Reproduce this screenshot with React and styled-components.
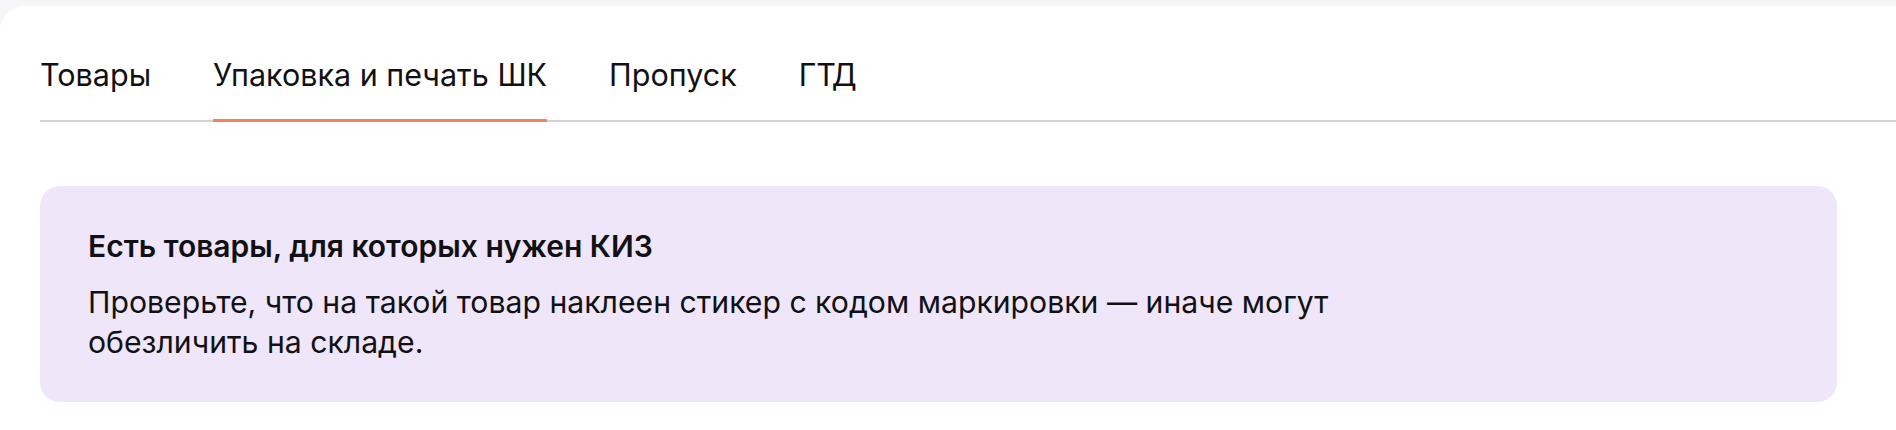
import React, { useState } from "react";
import styled, { createGlobalStyle } from "styled-components";

const GlobalStyle = createGlobalStyle`
  html, body {
    margin: 0;
    padding: 0;
    background: #f6f6f8;
  }
  body {
    font-family: Inter, "Noto Sans", "Liberation Sans", sans-serif;
    color: #111114;
    -webkit-font-smoothing: antialiased;
  }
  * { box-sizing: border-box; }
`;

const Page = styled.div`
  padding-top: 6px;
  min-height: 430px;
`;

const Panel = styled.section`
  background: #ffffff;
  border-top-left-radius: 24px;
  min-height: 424px;
  padding: 51px 0 0 40px;
`;

const TabBar = styled.nav`
  display: flex;
  gap: 62px;
  border-bottom: 2px solid #d2d2d4;
`;

const Tab = styled.button`
  appearance: none;
  background: none;
  border: none;
  border-bottom: 3px solid ${(p) => (p.$active ? "#ef8559" : "transparent")};
  margin-bottom: -2px;
  padding: 0 0 26px;
  font-family: inherit;
  font-size: 30.5px;
  line-height: 36px;
  font-weight: 400;
  color: #111114;
  cursor: pointer;
  white-space: nowrap;
`;

const Content = styled.div`
  padding: 64px 59px 0 0;
`;

const Notice = styled.div`
  background: #efe6fa;
  border-radius: 20px;
  padding: 42px 48px 40px;
`;

const NoticeTitle = styled.h3`
  margin: 0;
  font-size: 30px;
  line-height: 36px;
  font-weight: 600;
  color: #111114;
`;

const NoticeText = styled.p`
  margin: 18px 0 0;
  max-width: 1300px;
  font-size: 30.2px;
  line-height: 40px;
  font-weight: 400;
  color: #111114;
`;

const tabs = ["Товары", "Упаковка и печать ШК", "Пропуск", "ГТД"];

export default function App() {
  const [active, setActive] = useState(1);
  return (
    <>
      <GlobalStyle />
      <Page>
        <Panel>
          <TabBar>
            {tabs.map((t, i) => (
              <Tab key={t} $active={i === active} onClick={() => setActive(i)}>
                {t}
              </Tab>
            ))}
          </TabBar>
          <Content>
            <Notice>
              <NoticeTitle>Есть товары, для которых нужен КИЗ</NoticeTitle>
              <NoticeText>
                Проверьте, что на такой товар наклеен стикер с кодом маркировки — иначе могут
                обезличить на складе.
              </NoticeText>
            </Notice>
          </Content>
        </Panel>
      </Page>
    </>
  );
}
